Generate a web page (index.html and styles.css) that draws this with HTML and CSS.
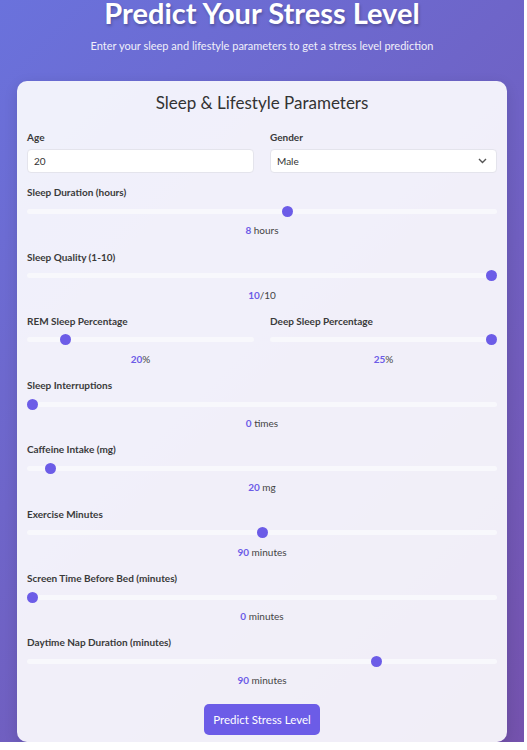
FILE: index.html
```html
<!DOCTYPE html>
<html lang="en">
<head>
<meta charset="utf-8">
<title>Predict Your Stress Level</title>
<link rel="stylesheet" href="styles.css">
</head>
<body>
<div class="page">
  <header class="hero">
    <h1 class="title">Predict Your Stress Level</h1>
    <p class="subtitle">Enter your sleep and lifestyle parameters to get a stress level prediction</p>
  </header>
  <form class="card">
    <h2 class="card-title">Sleep &amp; Lifestyle Parameters</h2>
    <div class="row">
      <div class="field">
        <label class="label">Age</label>
        <input class="text-input" type="text" value="20">
      </div>
      <div class="field">
        <label class="label">Gender</label>
        <div class="select">
          <span>Male</span>
          <svg class="chev" width="9" height="6" viewBox="0 0 9 6"><path d="M1 1l3.5 3.5L8 1" fill="none" stroke="#555" stroke-width="1.4"/></svg>
        </div>
      </div>
    </div>

    <div class="field">
      <label class="label">Sleep Duration (hours)</label>
      <input class="range" type="range" min="3" max="12" step="0.1" value="8">
      <div class="value"><b>8</b> hours</div>
    </div>

    <div class="field">
      <label class="label">Sleep Quality (1-10)</label>
      <input class="range" type="range" min="1" max="10" value="10">
      <div class="value"><b>10</b>/10</div>
    </div>

    <div class="row">
      <div class="field">
        <label class="label">REM Sleep Percentage</label>
        <input class="range" type="range" min="10" max="75" value="20">
        <div class="value"><b>20</b>%</div>
      </div>
      <div class="field">
        <label class="label">Deep Sleep Percentage</label>
        <input class="range" type="range" min="10" max="25" value="25">
        <div class="value"><b>25</b>%</div>
      </div>
    </div>

    <div class="field">
      <label class="label">Sleep Interruptions</label>
      <input class="range" type="range" min="0" max="10" value="0">
      <div class="value"><b>0</b> times</div>
    </div>

    <div class="field">
      <label class="label">Caffeine Intake (mg)</label>
      <input class="range" type="range" min="0" max="500" value="20">
      <div class="value"><b>20</b> mg</div>
    </div>

    <div class="field">
      <label class="label">Exercise Minutes</label>
      <input class="range" type="range" min="0" max="180" value="90">
      <div class="value"><b>90</b> minutes</div>
    </div>

    <div class="field">
      <label class="label">Screen Time Before Bed (minutes)</label>
      <input class="range" type="range" min="0" max="180" value="0">
      <div class="value"><b>0</b> minutes</div>
    </div>

    <div class="field">
      <label class="label">Daytime Nap Duration (minutes)</label>
      <input class="range" type="range" min="0" max="120" value="90">
      <div class="value"><b>90</b> minutes</div>
    </div>

    <div class="actions">
      <button class="btn" type="button">Predict Stress Level</button>
    </div>
  </form>
</div>
</body>
</html>
```
FILE: styles.css
```css
html, body {
  margin: 0;
  padding: 0;
  background: #ffffff;
}
body {
  font-family: Lato, "Open Sans", sans-serif;
  color: #333;
}
.page {
  width: 524px;
  height: 742px;
  overflow: hidden;
  background: linear-gradient(135deg, #6a72dc 0%, #7452ad 100%);
  box-sizing: border-box;
  padding-top: 0;
}
.hero {
  text-align: center;
  color: #fff;
}
.title {
  margin: 0;
  font-size: 29px;
  line-height: 26px;
  padding-top: 0;
  font-weight: 700;
  text-shadow: 1px 2px 3px rgba(0,0,0,0.25);
}
.subtitle {
  margin: 12px 0 0;
  font-size: 11px;
  line-height: 16px;
  opacity: 0.9;
}
.card {
  display: block;
  width: 490px;
  margin: 27px auto 0;
  box-sizing: border-box;
  padding: 10px 10px 7px;
  background: rgba(255,255,255,0.9);
  border-radius: 10px;
  box-shadow: 0 4px 14px rgba(0,0,0,0.12);
}
.card-title {
  margin: 0 0 15px;
  text-align: center;
  font-size: 17px;
  line-height: 24px;
  font-weight: 400;
  color: #333;
}
.row {
  display: grid;
  grid-template-columns: 1fr 1fr;
  column-gap: 16px;
}
.field {
  display: flex;
  flex-direction: column;
  margin-bottom: 12.3px;
}
.label {
  font-size: 10px;
  line-height: 14px;
  font-weight: 700;
  color: #3a3a3a;
  margin-bottom: 5px;
}
.text-input, .select {
  box-sizing: border-box;
  height: 24px;
  border: 1px solid #e4e4ec;
  border-radius: 4px;
  background: #fff;
  font-family: inherit;
  font-size: 10px;
  color: #333;
  padding: 0 6px;
  margin: 0;
  width: 100%;
}
.select {
  display: flex;
  align-items: center;
  justify-content: space-between;
  padding: 0 9px 0 6px;
}
.range {
  -webkit-appearance: none;
  appearance: none;
  width: 100%;
  height: 14px;
  margin: 0;
  padding: 0;
  background: transparent;
}
.range::-webkit-slider-runnable-track {
  height: 5px;
  border-radius: 3px;
  background: #f8f8fc;
}
.range::-webkit-slider-thumb {
  -webkit-appearance: none;
  appearance: none;
  width: 11px;
  height: 11px;
  border-radius: 50%;
  background: #6c5ce7;
  border: none;
  margin-top: -3px;
}
.value {
  margin-top: 5px;
  text-align: center;
  font-size: 10px;
  line-height: 14px;
  color: #444;
}
.value b {
  color: #6c5ce7;
  font-weight: 700;
}
.actions {
  display: flex;
  justify-content: center;
  padding-top: 4px;
}
.btn {
  font-family: inherit;
  font-size: 11.5px;
  white-space: nowrap;
  color: #fff;
  background: #6c5ce7;
  border: none;
  border-radius: 5px;
  height: 31px;
  padding: 0;
  width: 116px;
}
```
